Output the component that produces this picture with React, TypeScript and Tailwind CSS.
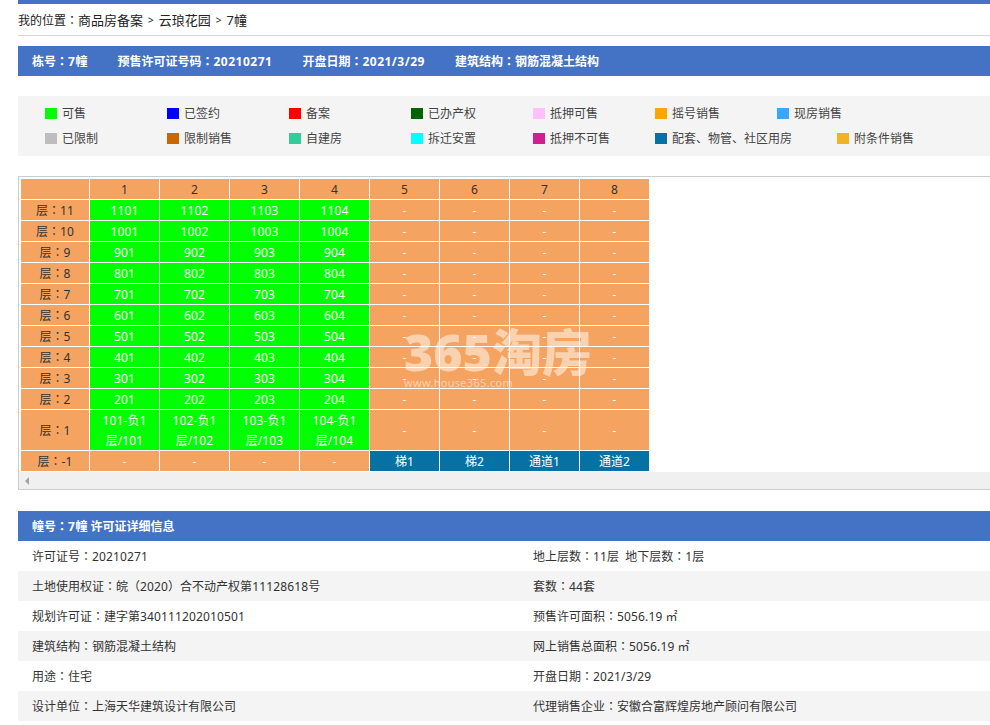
import type { ReactNode } from "react";

const font = "font-['Noto_Sans','Noto_Sans_CJK_SC',sans-serif]";

const legendRows = [
  [
    { name: "可售", color: "bg-[#00ff00]" },
    { name: "已签约", color: "bg-[#0000ff]" },
    { name: "备案", color: "bg-[#ff0000]" },
    { name: "已办产权", color: "bg-[#006400]" },
    { name: "抵押可售", color: "bg-[#ffc0fb]" },
    { name: "摇号销售", color: "bg-[#ffa500]" },
    { name: "现房销售", color: "bg-[#3ca5ff]" },
  ],
  [
    { name: "已限制", color: "bg-[#bdbdbd]" },
    { name: "限制销售", color: "bg-[#cc6600]" },
    { name: "自建房", color: "bg-[#33cc99]" },
    { name: "拆迁安置", color: "bg-[#00ffff]" },
    { name: "抵押不可售", color: "bg-[#d01f8f]" },
    { name: "配套、物管、社区用房", color: "bg-[#0572a3]", wide: true },
    { name: "附条件销售", color: "bg-[#f0b323]" },
  ],
];

const floors = [
  { floor: "11", rooms: ["1101", "1102", "1103", "1104"] },
  { floor: "10", rooms: ["1001", "1002", "1003", "1004"] },
  { floor: "9", rooms: ["901", "902", "903", "904"] },
  { floor: "8", rooms: ["801", "802", "803", "804"] },
  { floor: "7", rooms: ["701", "702", "703", "704"] },
  { floor: "6", rooms: ["601", "602", "603", "604"] },
  { floor: "5", rooms: ["501", "502", "503", "504"] },
  { floor: "4", rooms: ["401", "402", "403", "404"] },
  { floor: "3", rooms: ["301", "302", "303", "304"] },
  { floor: "2", rooms: ["201", "202", "203", "204"] },
  { floor: "1", rooms: ["101-负1层/101", "102-负1层/102", "103-负1层/103", "104-负1层/104"] },
];

const info = [
  ["许可证号：20210271", "地上层数：11层  地下层数：1层"],
  ["土地使用权证：皖（2020）合不动产权第11128618号", "套数：44套"],
  ["规划许可证：建字第340111202010501", "预售许可面积：5056.19 ㎡"],
  ["建筑结构：钢筋混凝土结构", "网上销售总面积：5056.19 ㎡"],
  ["用途：住宅", "开盘日期：2021/3/29"],
  ["设计单位：上海天华建筑设计有限公司", "代理销售企业：安徽合富辉煌房地产顾问有限公司"],
];

// punctuation sits centred in the reference, digits are a bit wider than Noto's
const Txt = ({ s, bold }: { s: string; bold?: boolean }) => (
  <>
    {s.split(/([：（）]|[0-9./-]+)/).filter(Boolean).map((part, i) => {
      if (/[：（）]/.test(part)) return <span key={i} className="font-['Noto_Sans_CJK_TC',sans-serif] leading-none">{part}</span>;
      if (/[0-9]/.test(part)) return <span key={i} className={bold ? "tracking-[0.5px]" : "tracking-[0.14px]"}>{part}</span>;
      return <span key={i}>{part}</span>;
    })}
  </>
);

const Cell = ({ className, children }: { className: string; children?: ReactNode }) => (
  <td className={`border-r border-t border-white px-[5px] text-center align-middle leading-5 h-[21px] ${className}`}>
    <span className="relative top-px">{children}</span>
  </td>
);

const orange = "bg-[#f4a460]";

const App = () => {
  return (
    <div className={`${font} w-[990px] pl-[18px] text-xs text-[#333] bg-white`}>
      <div className="h-1 bg-[#4472c4]"></div>
      <div className="flex items-center h-8 pt-[3px] border-b border-[#d8d8d8] text-[#222]">
        <span><Txt s="我的位置：" /></span>
        <span className="text-[13px]">商品房备案</span>
        <span className="mx-[5px] text-[10px]">&gt;</span>
        <span className="text-[13px]">云琅花园</span>
        <span className="mx-[5px] text-[10px]">&gt;</span>
        <span className="text-[13px]">7幢</span>
      </div>

      <div className="flex gap-[30px] items-center h-[30px] mt-[10px] pt-px pl-[14px] bg-[#4472c4] text-white font-bold">
        <span><Txt s="栋号：7幢" bold /></span>
        <span><Txt s="预售许可证号码：20210271" bold /></span>
        <span><Txt s="开盘日期：2021/3/29" bold /></span>
        <span><Txt s="建筑结构：钢筋混凝土结构" bold /></span>
      </div>

      <div className="h-[60px] mt-5 pt-[5px] pl-[27px] bg-[#f4f4f4] text-[#444]">
        {legendRows.map((row, i) => (
          <div key={i} className="flex h-[25px]">
            {row.map((item) => (
              <div key={item.name} className={`flex items-center gap-[5px] ${item.wide ? "w-[182px]" : "w-[122px]"}`}>
                <span className={`w-3 h-[11px] ${item.color}`}></span>
                <span>{item.name}</span>
              </div>
            ))}
          </div>
        ))}
      </div>

      <div className="relative mt-5 border border-r-0 border-[#ccc] overflow-hidden">
        <div className="pt-px pl-[2px]">
          <table className="table-fixed border-separate border-spacing-0 w-[629px]">
            <colgroup>
              <col className="w-[69px]" />
              <col className="w-[70px]" span={8} />
            </colgroup>
            <tbody>
              <tr>
                <Cell className={orange}></Cell>
                {[1, 2, 3, 4, 5, 6, 7, 8].map((n) => (
                  <Cell key={n} className={orange}>{n}</Cell>
                ))}
              </tr>
              {floors.map((row) => (
                <tr key={row.floor}>
                  <Cell className={orange}><Txt s={`层：${row.floor}`} /></Cell>
                  {row.rooms.map((room) => (
                    <Cell key={room} className="bg-[#00ff00] text-white"><Txt s={room} /></Cell>
                  ))}
                  {[5, 6, 7, 8].map((n) => (
                    <Cell key={n} className={`${orange} text-white`}>-</Cell>
                  ))}
                </tr>
              ))}
              <tr>
                <Cell className={orange}><Txt s="层：-1" /></Cell>
                {[1, 2, 3, 4].map((n) => (
                  <Cell key={n} className={`${orange} text-white`}>-</Cell>
                ))}
                {["梯1", "梯2", "通道1", "通道2"].map((name) => (
                  <Cell key={name} className="bg-[#0572a3] text-white">{name}</Cell>
                ))}
              </tr>
            </tbody>
          </table>
        </div>
        <div className="flex items-center h-[17px] mt-px pl-[6px] bg-[#f0f0f0]">
          <svg width="4" height="8" viewBox="0 0 4 8">
            <path d="M4 0 L0 4 L4 8 Z" fill="#a3a3a3" />
          </svg>
        </div>
        <div className="absolute left-[385px] top-[150px] pointer-events-none text-white/50">
          <div className="text-[50px] leading-[50px] font-black whitespace-nowrap">365淘房</div>
          <div className="text-[11px] leading-3 tracking-[0.3px]">www.house365.com</div>
        </div>
      </div>

      <div className="flex items-center h-[30px] mt-[21px] pt-[2px] pl-[14px] bg-[#4472c4] text-white font-bold">
        <span><Txt s="幢号：7幢 许可证详细信息" bold /></span>
      </div>
      {info.map((row, i) => (
        <div key={i} className={`grid grid-cols-[501px_1fr] items-center h-[30px] pt-[2px] whitespace-pre ${i % 2 ? "bg-[#f4f4f4]" : "bg-white"}`}>
          <div className="pl-[14px]"><Txt s={row[0]} /></div>
          <div className="pl-[14px]"><Txt s={row[1]} /></div>
        </div>
      ))}
    </div>
  );
};

export default App;
